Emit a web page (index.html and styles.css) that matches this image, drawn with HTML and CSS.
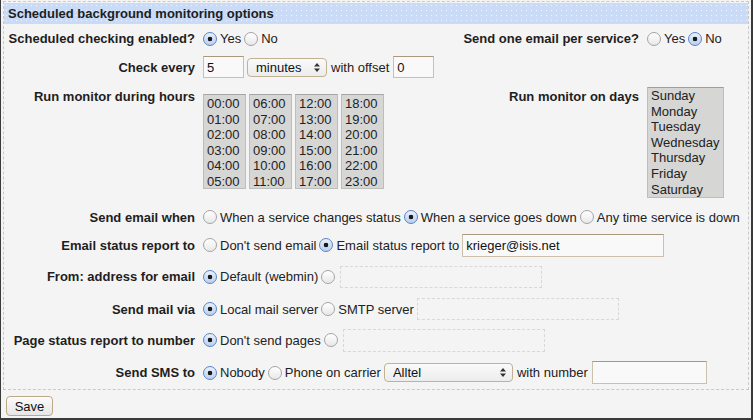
FILE: index.html
```html
<!DOCTYPE html>
<html>
<head>
<meta charset="utf-8">
<title>Scheduled monitoring</title>
<link rel="stylesheet" href="styles.css">
</head>
<body>
<div class="frame">
  <form class="form">
    <div class="section">
      <div class="head">Scheduled background monitoring options</div>
      <div class="grid">
        <div class="lbl">Scheduled checking enabled?</div>
        <div class="val">
          <label class="opt"><input type="radio" name="sched" checked>Yes</label>
          <label class="opt"><input type="radio" name="sched">No</label>
        </div>
        <div class="lbl">Send one email per service?</div>
        <div class="val">
          <label class="opt"><input type="radio" name="per">Yes</label>
          <label class="opt"><input type="radio" name="per" checked>No</label>
        </div>

        <div class="lbl">Check every</div>
        <div class="val span3">
          <input class="txt w41" type="text" value="5">
          <span class="sel w80"><select><option>minutes</option></select><svg class="arr" width="6" height="9" viewBox="0 0 6 9"><path d="M3 0L6 3.5H0Z M3 9L6 5.5H0Z" fill="#333"/></svg></span>
          <span class="t">with offset</span>
          <input class="txt w41" type="text" value="0">
        </div>

        <div class="lbl top">Run monitor during hours</div>
        <div class="val top hours">
          <div class="lb hb"><div>00:00</div><div>01:00</div><div>02:00</div><div>03:00</div><div>04:00</div><div>05:00</div></div>
          <div class="lb hb"><div>06:00</div><div>07:00</div><div>08:00</div><div>09:00</div><div>10:00</div><div>11:00</div></div>
          <div class="lb hb"><div>12:00</div><div>13:00</div><div>14:00</div><div>15:00</div><div>16:00</div><div>17:00</div></div>
          <div class="lb hb"><div>18:00</div><div>19:00</div><div>20:00</div><div>21:00</div><div>22:00</div><div>23:00</div></div>
        </div>
        <div class="lbl top">Run monitor on days</div>
        <div class="val top">
          <div class="lb days"><div>Sunday</div><div>Monday</div><div>Tuesday</div><div>Wednesday</div><div>Thursday</div><div>Friday</div><div>Saturday</div></div>
        </div>

        <div class="lbl">Send email when</div>
        <div class="val span3">
          <label class="opt"><input type="radio" name="when">When a service changes status</label>
          <label class="opt"><input type="radio" name="when" checked>When a service goes down</label>
          <label class="opt"><input type="radio" name="when">Any time service is down</label>
        </div>

        <div class="lbl">Email status report to</div>
        <div class="val span3">
          <label class="opt"><input type="radio" name="email">Don't send email</label>
          <label class="opt"><input type="radio" name="email" checked>Email status report to</label>
          <input class="txt w202 h23" type="text" value="krieger@isis.net">
        </div>

        <div class="lbl">From: address for email</div>
        <div class="val span3">
          <label class="opt"><input type="radio" name="from" checked>Default (webmin)</label>
          <label class="opt"><input type="radio" name="from"></label>
          <input class="txt dis w202 from" type="text" disabled>
        </div>

        <div class="lbl">Send mail via</div>
        <div class="val span3">
          <label class="opt"><input type="radio" name="via" checked>Local mail server</label>
          <label class="opt"><input type="radio" name="via">SMTP server</label>
          <input class="txt dis w202" type="text" disabled>
        </div>

        <div class="lbl">Page status report to number</div>
        <div class="val span3">
          <label class="opt"><input type="radio" name="page" checked>Don't send pages</label>
          <label class="opt"><input type="radio" name="page"></label>
          <input class="txt dis w202 h23 pg" type="text" disabled>
        </div>

        <div class="lbl">Send SMS to</div>
        <div class="val span3">
          <label class="opt"><input type="radio" name="sms" checked>Nobody</label>
          <label class="opt"><input type="radio" name="sms">Phone on carrier</label>
          <span class="sel w129"><select><option>Alltel</option></select><svg class="arr" width="6" height="9" viewBox="0 0 6 9"><path d="M3 0L6 3.5H0Z M3 9L6 5.5H0Z" fill="#333"/></svg></span>
          <span class="t">with number</span>
          <input class="txt w115 h23" type="text">
        </div>
      </div>
    </div>
    <div class="actions"><button type="button" class="btn">Save</button></div>
  </form>
</div>
</body>
</html>
```

FILE: styles.css
```css
html, body {
  margin: 0;
  padding: 0;
  background: #f4f4f4;
}

.frame {
  width: 753px;
  height: 420px;
  box-sizing: border-box;
  border-left: 1px solid #3a3a3a;
  border-right: 2px solid #3a3a3a;
  border-bottom: 2px solid #3a3a3a;
  background: #f4f4f4;
  font-family: "Liberation Sans", Arial, sans-serif;
  font-size: 13px;
  color: #222;
  padding-top: 1px;
}

.form {
  margin: 0;
}

.section {
  margin: 0 2px;
  border: 1px dashed #c9c9c9;
  padding-top: 1px;
}

.head {
  height: 21px;
  line-height: 21px;
  padding-left: 4px;
  font-weight: bold;
  color: #1e1e1e;
  background-color: #c9dbf6;
  background-image: radial-gradient(circle, rgba(255,255,255,0.75) 0.6px, transparent 0.9px);
  background-size: 5px 5px;
}

.grid {
  display: grid;
  grid-template-columns: 191px 229px 199px 1fr;
  grid-template-rows: 29px 28px 122px 28px 28px 35px 30px 32px 33px;
  column-gap: 8px;
}

.lbl {
  font-weight: bold;
  text-align: right;
  display: flex;
  align-items: center;
  justify-content: flex-end;
  white-space: nowrap;
  color: #1e1e1e;
}

.lbl.top {
  align-items: flex-start;
  padding-top: 8px;
}

.val {
  display: flex;
  align-items: center;
  gap: 3px;
  white-space: nowrap;
}

.val.top {
  align-items: flex-start;
}

.span3 {
  grid-column: 2 / 5;
}

.opt {
  display: inline-flex;
  align-items: center;
  gap: 3px;
}

.opt input[type="radio"] {
  appearance: none;
  -webkit-appearance: none;
  margin: 0;
  width: 14px;
  height: 14px;
  border-radius: 50%;
  border: 1px solid #a4a4a4;
  background: linear-gradient(#ffffff, #e8e8e8);
  box-sizing: border-box;
  flex: none;
}

.opt input[type="radio"]:checked {
  border-color: #5b84c4;
  background: radial-gradient(circle, #1a1a1a 0 2px, transparent 2.6px),
              linear-gradient(#e9f1fc, #b9cff0);
}

.t {
  margin: 0 1px;
}

.txt {
  height: 22px;
  box-sizing: border-box;
  margin: 0;
  border: 1px solid #cbc0ab;
  border-top-color: #a9987b;
  background: #f9f9f9;
  padding: 0 3px;
  font-family: "Liberation Sans", Arial, sans-serif;
  font-size: 13px;
  color: #111;
  outline: none;
}

.txt.dis {
  border: 1px dashed #d8d8d8;
  background: #f4f4f4;
}

.txt.from {
  margin-left: 2px;
}

.txt.pg {
  margin-left: 2px;
}

.h23 {
  height: 23px;
}

.w41 { width: 41px; }
.w202 { width: 202px; }
.w115 { width: 115px; }

.sel {
  position: relative;
  display: inline-block;
  height: 19px;
}

.sel select {
  appearance: none;
  -webkit-appearance: none;
  width: 100%;
  height: 19px;
  margin: 0;
  box-sizing: border-box;
  border: 1px solid #c2b294;
  border-radius: 4px;
  background: linear-gradient(#fafafa, #ececec);
  padding: 0 0 0 8px;
  font-family: "Liberation Sans", Arial, sans-serif;
  font-size: 13px;
  color: #111;
  outline: none;
}

.sel .arr {
  position: absolute;
  right: 7px;
  top: 5px;
  pointer-events: none;
}

.w80 { width: 80px; }
.w129 { width: 129px; }

.hours {
  gap: 3px;
  padding-top: 13px;
}

.lb {
  box-sizing: border-box;
  border: 1px solid #bdbdbd;
  border-top-color: #a5a5a5;
  background: #d6d6d4;
  padding: 0 3px;
  color: #222;
}

.hb {
  width: 43px;
  height: 95px;
  line-height: 15.5px;
  padding-top: 1px;
}

.days {
  width: 77px;
  height: 111px;
  line-height: 15.6px;
  margin-top: 6px;
  border-top-color: #b39a78;
}

.actions {
  padding: 6px 0 0 5px;
}

.btn {
  height: 20px;
  width: 47px;
  margin: 0;
  padding: 0;
  border: 1px solid #bba98a;
  border-radius: 4px;
  background: linear-gradient(#fbfbfb, #e6e6e6);
  font-family: "Liberation Sans", Arial, sans-serif;
  font-size: 13px;
  color: #111;
}
```
